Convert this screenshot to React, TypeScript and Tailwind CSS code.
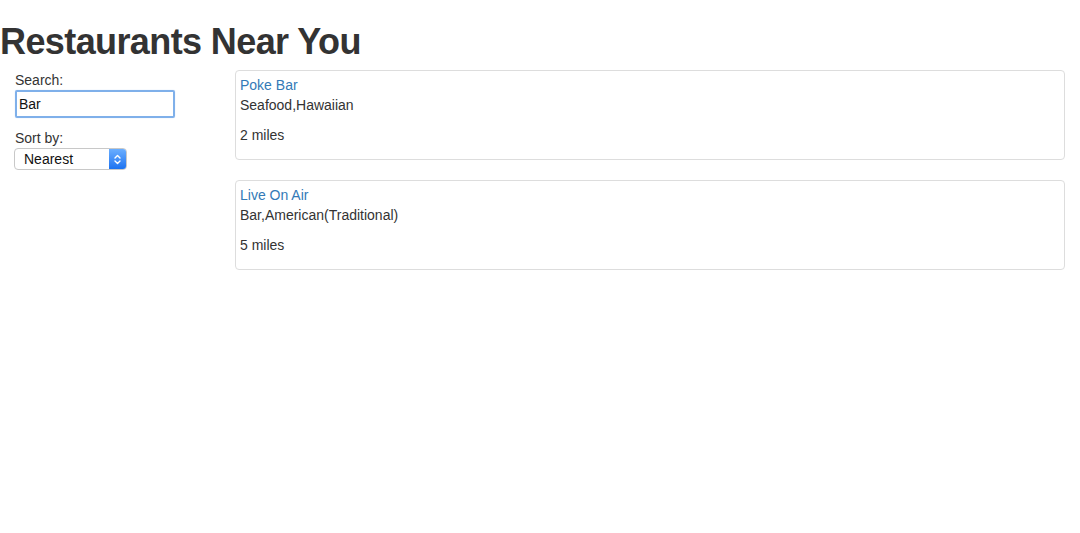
import React from "react";

const restaurants = [
  { name: "Poke Bar", cats: "Seafood,Hawaiian", dist: "2 miles" },
  { name: "Live On Air", cats: "Bar,American(Traditional)", dist: "5 miles" },
];

export default function App() {
  return (
    <div className="min-h-[533px] bg-white text-[#333] text-[14px] leading-[20px]" style={{ fontFamily: '"Liberation Sans", Arial, sans-serif' }}>
      <h1 className="m-0 pt-[22px] text-[36px] leading-[40px] font-bold tracking-[-0.6px] text-[#333]">Restaurants Near You</h1>
      <div className="flex mt-[8px]">
        <div className="w-[235px] pl-[15px] shrink-0">
          <div className="leading-[20px]">Search:</div>
          <div className="w-[160px] h-[28px] border-2 border-[#7fb0ea] rounded-[2px] flex items-center px-[2px] shadow-[0_0_1px_#a9c9f0]">
            <span className="text-[14px] text-[#111]">Bar</span>
          </div>
          <div className="mt-[10px] leading-[20px]">Sort by:</div>
          <div className="w-[113px] h-[22px] -ml-[1px] border border-[#c8c8c8] rounded-[4px] flex items-stretch overflow-hidden bg-white">
            <span className="flex-1 pl-[9px] text-[14px] leading-[21px] text-[#111]">Nearest</span>
            <span className="w-[17px] bg-gradient-to-b from-[#6aaeff] to-[#1a72f0] flex items-center justify-center">
              <svg width="9" height="13" viewBox="0 0 9 13" fill="none" stroke="white" strokeWidth="1.4" strokeLinecap="round" strokeLinejoin="round">
                <path d="M2 5 L4.5 2.5 L7 5" />
                <path d="M2 8 L4.5 10.5 L7 8" />
              </svg>
            </span>
          </div>
        </div>
        <div className="flex-1 pr-[15px] flex flex-col gap-[20px]">
          {restaurants.map((r) => (
            <div key={r.name} className="h-[90px] border border-[#ddd] rounded-[4px] px-[4px] pt-[4px]">
              <div className="text-[#337ab7]">{r.name}</div>
              <div>{r.cats}</div>
              <div className="mt-[10px]">{r.dist}</div>
            </div>
          ))}
        </div>
      </div>
    </div>
  );
}
